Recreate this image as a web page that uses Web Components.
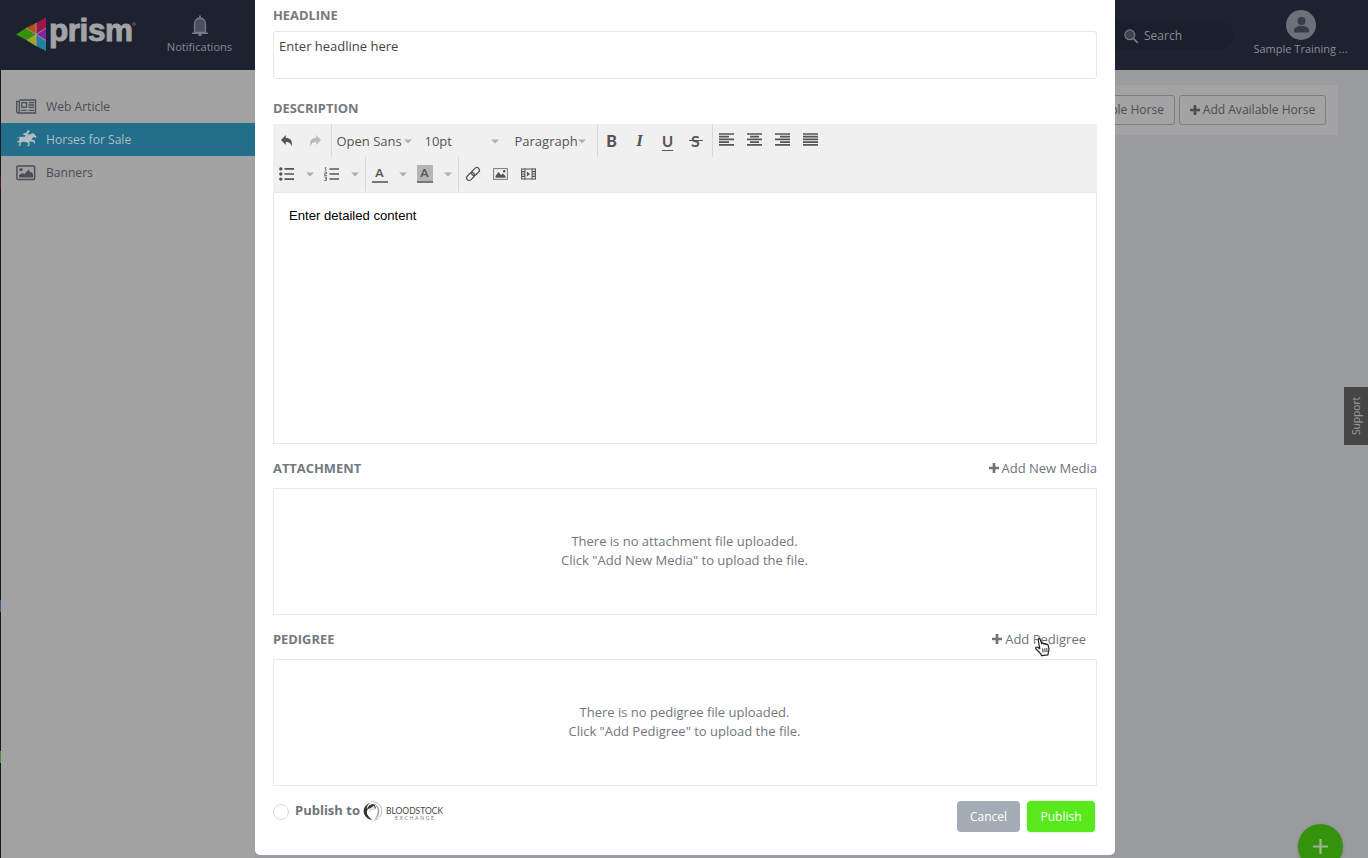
<!DOCTYPE html>
<html lang="en">
<head>
<meta charset="utf-8">
<title>Prism</title>
<style>
    html, body {
        margin: 0;
        height: 100%;
        overflow: hidden;
    }

    body {
        font: 13px/19px "Open Sans", sans-serif;
        color: #6b6f76;
        background: #9a9b9d;
    }
</style>
</head>
<body>
<prism-app></prism-app>

<script>
const ICONS = {
    bell: ['0 0 18 22', `<path d="M1 18.3h16" stroke="currentColor" stroke-width="1.4"/><path d="M3.500 17.500V9a5.500 6 0 0 1 11 0v8.500z" fill="#4b5060" stroke="currentColor" stroke-width="1.300"/><path d="M9 .4v2.400M7.500 20h3" stroke="currentColor" stroke-width="1.800"/>`],
    news: ['0 0 21 15', `<g fill="none" stroke="currentColor" stroke-width="1.300"><path d="M3.500 1h16v13H2.200C1 14 .7 13 .7 12V2.500h2.600V12c0 1-.4 1.800-1 2"/><rect x="5.800" y="3.700" width="4.700" height="4.600"/><path d="M12.500 3.700H18M12.500 6H18M12.500 8.300H18M5.200 11.300h5.500M12.500 11.300H18"/></g>`],
    horse: ['0 0 21 19', `<path fill="currentColor" d="M.5 9.500c.3-1.500 1.300-2.300 3-2.300 1.500-.4 3.200-.5 5-.2l1.300-1.700-2.600-.4.3-1.300 3.300-1.400c.2-.9.500-1.700 1.300-1.900.9-.2 1.600.4 1.500 1.200 0 .8-.5 1.200-1.200 1.200l-.9 1.200 1.900.6-.2.8-1.500.1.300.7 2.500-2.100 1.400-.4.3-.8.7.7 1.200.3 2.500 3-.6.9-1.400-.3-1.300-.3-1.700 2.500 2.500.7 1.200 1.500-.5 1.700-.9.200-.1-1.700-3.200-.6-1.700.4 1.200 1.900-1.500 2.500-1.600-.2.100-.7 1-.4.500-1.300-2.600-1.700-3.200-.1-1.700.7-.7 3.300-1.200.3-.8-.7.9-.8.200-2.500-1 .5-1.700-.4.3-.8 1.100-.1 1.300-1.700-.8-2.500-1.500.1-1 2.900z"/>`],
    banner: ['0 0 20 16', `<rect x=".9" y=".9" width="17.700" height="13.700" rx="1" fill="none" stroke="currentColor" stroke-width="1.500"/><circle cx="5" cy="4.600" r="1.700" fill="currentColor"/><path fill="currentColor" d="M3 12.500V10l3.500-2 2 1 4-4.500 2 3 1-.5 1.500 2.500v3z"/>`],
    search: ['0 0 15 15', `<circle cx="5.800" cy="5.800" r="4.900" fill="#3d4251" stroke="currentColor" stroke-width="1.200"/><path d="M9.300 9.300l4.500 4.500" stroke="currentColor" stroke-width="1.700"/>`],
    avatar: ['0 0 30 30', `<circle cx="15" cy="15" r="15" fill="#6c7078"/><circle cx="15.500" cy="11" r="4" fill="#363b4a"/><path d="M8 22.500v-2c0-3 3-4.500 7.500-4.500s7.500 1.500 7.500 4.500v2z" fill="#363b4a"/>`],
    plus: ['0 0 10 10', `<path d="M5 0v10M0 5h10" stroke="currentColor" stroke-width="2.700"/>`],
    thin: ['0 0 15 15', `<path d="M7.500 0v15M0 7.500h15" stroke="currentColor" stroke-width="2.200"/>`],
    caret: ['0 0 8 5', `<path fill="currentColor" d="M0 .5h8L4 4.500z"/>`],
    undo: ['0 0 12 12', `<path fill="currentColor" d="M4.800 0v2.800C9.500 3 11.800 6 10.600 11.500 10 8.500 8.500 7 4.800 7v3L0 5z"/>`],
    redo: ['0 0 12 12', `<path fill="currentColor" d="M7.200 0v2.800C2.500 3 .2 6 1.400 11.500 2 8.500 3.500 7 7.200 7v3L12 5z"/>`],
    left: ['0 0 15 13', `<path d="M0 1h15M0 3.700h10M0 6.400h15M0 9.100h10M0 11.800h15" stroke="currentColor" stroke-width="1.700"/>`],
    center: ['0 0 15 13', `<path d="M0 1h15M3 3.700h9M0 6.400h15M3 9.100h9M0 11.800h15" stroke="currentColor" stroke-width="1.700"/>`],
    right: ['0 0 15 13', `<path d="M0 1h15M5 3.700h10M0 6.400h15M5 9.100h10M0 11.800h15" stroke="currentColor" stroke-width="1.700"/>`],
    justify: ['0 0 15 13', `<path d="M0 1h15M0 3.700h15M0 6.400h15M0 9.100h15M0 11.800h15" stroke="currentColor" stroke-width="1.700"/>`],
    bullets: ['0 0 15 14', `<g fill="currentColor"><circle cx="1.800" cy="1.900" r="1.700"/><circle cx="1.800" cy="7" r="1.700"/><circle cx="1.800" cy="12.100" r="1.700"/></g><path d="M5.500 1.900H15M5.500 7H15M5.500 12.100H15" stroke="currentColor" stroke-width="1.700"/>`],
    numbers: ['0 0 15 14', `<path d="M5.500 2H15M5.500 7H15M5.500 12H15" stroke="currentColor" stroke-width="1.700"/><path d="M.8.900l1-.5v3.400M.4 5h2.100v1.700H.6v1.800h2.200M.4 10h2v1.700H1m1.400 0v1.800h-2" fill="none" stroke="currentColor" stroke-width=".8"/>`],
    link: ['0 0 14 14', `<g fill="none" stroke="currentColor" stroke-width="1.200" transform="rotate(-45 7 7)"><rect x="-1" y="4.400" width="9" height="5.200" rx="2.600"/><rect x="6" y="4.400" width="9" height="5.200" rx="2.600"/></g>`],
    image: ['0 0 15 12', `<rect x=".6" y=".6" width="13.800" height="10.800" fill="none" stroke="currentColor" stroke-width="1" opacity=".75"/><path fill="currentColor" d="M2.500 9.800V8L5.500 4l2.500 3 2-1.500L12.500 8v1.800z"/><circle cx="11.200" cy="3.300" r="1.200" fill="currentColor"/>`],
    media: ['0 0 15 12', `<path fill="currentColor" d="M5.800 3.500v5L9.200 6z"/><path d="M.5 1h14M.5 11h14" stroke="currentColor"/><path d="M.6.500v11M3.900.5v11M11.100.5v11M14.400.5v11" stroke="currentColor" stroke-width="1.100"/><path d="M1 3.600h3M1 6h3M1 8.400h3M11 3.600h3M11 6h3M11 8.400h3" stroke="currentColor" stroke-width="1.100"/>`],
    hand: ['0 0 15 18', `<path fill="#fff" stroke="#222" stroke-width="1.200" stroke-linejoin="round" d="M3.200 2C2.900.4 4.900.1 5.400 1.700l1.300 4.200c.3-1 1.900-1 2.200.2.500-.8 1.900-.6 2.100.5.700-.7 2-.3 2.200.8l.7 3.800c.2 1.500-.6 2.600-.7 4l-.2 1.700-6.500.8-.5-1.500C4.500 14.500 3 12.800 1 11c-1-1.200.3-2.400 1.600-1.700l2.200 1.400z"/><path d="M7.600 10.500l.5 4M9.700 10.300l.4 4M11.700 10l.4 4" stroke="#222" stroke-width=".9"/>`],
};

/**
 * inline svg icon
 * @property {ShadowRoot} root
 */
class UiIcon extends HTMLElement {
    connectedCallback() {
        const [box, shapes] = ICONS[this.getAttribute('name')];
        const [, , width, height] = box.split(' ');
        const root = this.attachShadow({ mode: 'open' });
        root.innerHTML = /*html*/ `
            <style>
                :host{
                    display: inline-block;
                    flex: none;
                    width: ${width}px;
                    height: ${height}px;
                }

                svg{
                    display: block;
                    overflow: visible;
                }
            </style>
            <svg width="100%" height="100%" viewBox="${box}">${shapes}</svg>
        `;
    }
}

/**
 * base class, renders the static template of the element
 */
class BaseElement extends HTMLElement {
    constructor() {
        super();
        this.root = this.attachShadow({ mode: 'open' });
    }

    connectedCallback() {
        this.root.innerHTML = this.render();
    }
}

class PrismHeader extends BaseElement {
    render() {
        return /*html*/ `
            <style>
                :host{
                    display: flex;
                    box-sizing: border-box;
                    height: 70px;
                    background: #1e2130;
                    color: #8b8d93;
                    font-size: 11px;
                    line-height: 16px;
                }

                .logo{
                    margin-left: 16px;
                    width: 124px;
                }

                .bell{
                    display: flex;
                    flex-direction: column;
                    align-items: center;
                    width: 119px;
                    padding-top: 15px;
                    color: #777a83;
                }

                .bell span{
                    margin-top: 2px;
                    color: #858891;
                    font-size: 11.1px;
                }

                .search{
                    display: flex;
                    align-items: center;
                    gap: 5px;
                    box-sizing: border-box;
                    width: 133px;
                    height: 30px;
                    margin: 20px 0 0 auto;
                    padding: 1px 0 0 24px;
                    border-radius: 15px;
                    background: #1a1f2c;
                    font-size: 12px;
                }

                .search ui-icon{
                    margin-top: 2px;
                    color: #777a80;
                }

                .user{
                    display: flex;
                    flex-direction: column;
                    align-items: center;
                    width: 135px;
                    padding-top: 10px;
                }

                .user span{
                    margin-top: 1px;
                }
            </style>
            <svg class="logo" height="70" viewBox="0 0 124 70">
                <path fill="#35920c" d="M0 34.500l10-6.500 10 6.500-9 6z"/>
                <path fill="#ad5316" d="M10 28l10-5v11.500z"/>
                <path fill="#9a1748" d="M20 23l10-5.500V28l-10 6.500z"/>
                <path fill="#84249a" d="M20 34.500l10-6.500v12.500z"/>
                <path fill="#a5a51b" d="M11 40.500l9-6V46z"/>
                <path fill="#25809e" d="M20 34.500l10 6V51l-10-5z"/>
                <path d="M10 28l20 12.500M11 40.500L30 28M20 23v23" stroke="#b3a4ac" stroke-width=".8"/>
                <text x="33" y="41" textLength="84" font-family="Liberation Sans, sans-serif" font-size="31.500" font-weight="700" fill="#a3a3a5" stroke="#a3a3a5" stroke-width="1">prism</text>
                <circle cx="118" cy="24" r="1.300" fill="none" stroke="#777a80" stroke-width=".7"/>
            </svg>
            <div class="bell"><ui-icon name="bell"></ui-icon><span>Notifications</span></div>
            <div class="search"><ui-icon name="search"></ui-icon><span>Search</span></div>
            <div class="user"><ui-icon name="avatar"></ui-icon><span>Sample Training ...</span></div>
        `;
    }
}

class NavItem extends BaseElement {
    render() {
        return /*html*/ `
            <style>
                :host{
                    display: flex;
                    align-items: center;
                    height: 33px;
                    padding-left: 15px;
                    font-size: 12.1px;
                    color: #4b4e57;
                }

                :host([active]){
                    background: #216f8b;
                    color: #b3bcc0;
                }

                .icon{
                    display: flex;
                    width: 30px;
                }
            </style>
            <span class="icon"><ui-icon name="${this.getAttribute('icon')}"></ui-icon></span>
            <slot></slot>
        `;
    }
}

class SideNav extends BaseElement {
    render() {
        return /*html*/ `
            <style>
                :host{
                    display: block;
                    box-sizing: border-box;
                    width: 255px;
                    padding-top: 20px;
                    background: #a2a2a2;
                    border-left: 1px solid;
                    border-image: linear-gradient(#1b1822 0 107px, #461a27 107px 120px, #1b1822 120px 530px, #3b5a8c 530px 542px, #1b1822 542px 680px, #4c8a38 680px 692px, #1b1822 692px) 1;
                }
            </style>
            <nav-item icon="news">Web Article</nav-item>
            <nav-item icon="horse" active>Horses for Sale</nav-item>
            <nav-item icon="banner">Banners</nav-item>
        `;
    }
}

class FormSection extends BaseElement {
    render() {
        return /*html*/ `
            <style>
                :host{
                    display: block;
                }

                header{
                    display: flex;
                    align-items: center;
                    justify-content: space-between;
                    box-sizing: border-box;
                    height: var(--head, 44px);
                    padding-top: var(--head-top, 4px);
                    padding-right: var(--head-right, 0px);
                }

                h3{
                    margin: 0;
                    font-size: 12.9px;
                    font-weight: 700;
                    line-height: 17px;
                    color: #757980;
                }
            </style>
            <header><h3>${this.getAttribute('label')}</h3><slot name="action"></slot></header>
            <slot></slot>
        `;
    }
}

class AddLink extends BaseElement {
    render() {
        return /*html*/ `
            <style>
                :host{
                    display: flex;
                    align-items: center;
                    gap: 3px;
                    color: #6f737a;
                }
            </style>
            <ui-icon name="plus"></ui-icon><slot></slot>
        `;
    }
}

class EmptyBox extends BaseElement {
    render() {
        return /*html*/ `
            <style>
                :host{
                    display: flex;
                    align-items: center;
                    justify-content: center;
                    box-sizing: border-box;
                    height: 127px;
                    padding: 0 1px 2px 0;
                    border: 1px solid #e9eaeb;
                    text-align: center;
                    color: #72767c;
                }
            </style>
            <div><slot></slot></div>
        `;
    }
}

class TextEditor extends BaseElement {
    render() {
        return /*html*/ `
            <style>
                :host{
                    display: flex;
                    flex-direction: column;
                    height: 320px;
                    color: #555;
                }

                .toolbar{
                    background: #f0f0f0;
                    height: 68px;
                }

                .row{
                    display: flex;
                    height: 34px;
                }

                .row:first-child{
                    height: 33px;
                }

                .group{
                    display: flex;
                    align-items: center;
                    box-sizing: border-box;
                    border-right: 1px solid #d9d9d9;
                }

                .group:last-child{
                    border: 0;
                }

                .group > span{
                    display: flex;
                    align-items: center;
                    justify-content: center;
                    width: 27px;
                    padding-right: 1px;
                }

                .group > .drop{
                    width: 17px;
                    padding: 0;
                }

                .drop ui-icon, .select ui-icon{
                    width: 8px;
                    height: 5px;
                    color: #b0b0b0;
                }

                .group > .select{
                    box-sizing: border-box;
                    justify-content: space-between;
                    padding: 2px 12px 0 4.5px;
                    width: 88px;
                    white-space: nowrap;
                }

                .format{
                    font: 900 16px/18px Lato, sans-serif;
                }

                .underline{
                    font-weight: 700;
                    font-size: 15px;
                    text-decoration: underline;
                    text-underline-offset: 3px;
                }

                .strike{
                    font-weight: 700;
                    background: linear-gradient(currentColor, currentColor) center / 14px 1px no-repeat;
                }

                .aligns ui-icon{
                    margin-top: -2px;
                }

                .letter{
                    box-sizing: border-box;
                    width: 16px;
                    height: 18px;
                    border-bottom: 2px solid #777;
                    text-align: center;
                    font: 700 12px/16px Lato, sans-serif;
                }

                .fill{
                    background: #b5b5b5;
                }

                .content{
                    flex: 1;
                    border: 1px solid #e7e7e7;
                    padding: 13px 15px;
                    font: 13.1px/20px "Liberation Sans", Arial, sans-serif;
                    color: #000;
                }
            </style>
            <div class="toolbar">
                <div class="row">
                    <div class="group" style="width: 59px">
                        <span><ui-icon name="undo"></ui-icon></span>
                        <span style="color: #bbb"><ui-icon name="redo"></ui-icon></span>
                    </div>
                    <div class="group" style="width: 266px">
                        <span class="select" style="padding-right: 8px">Open Sans<ui-icon name="caret"></ui-icon></span>
                        <span class="select" style="width: 90px; padding-right: 11px">10pt<ui-icon name="caret"></ui-icon></span>
                        <span class="select" style="width: 87px; padding-right: 11px">Paragraph<ui-icon name="caret"></ui-icon></span>
                    </div>
                    <div class="group" style="width: 115px">
                        <span class="format">B</span>
                        <span class="format" style="font: italic 700 17px/18px 'Liberation Serif', serif">I</span>
                        <span class="format underline">U</span>
                        <span class="format strike">S</span>
                    </div>
                    <div class="group aligns">
                        <span><ui-icon name="left"></ui-icon></span>
                        <span><ui-icon name="center"></ui-icon></span>
                        <span><ui-icon name="right"></ui-icon></span>
                        <span><ui-icon name="justify"></ui-icon></span>
                    </div>
                </div>
                <div class="row">
                    <div class="group" style="width: 93px">
                        <span><ui-icon name="bullets"></ui-icon></span>
                        <span class="drop"><ui-icon name="caret"></ui-icon></span>
                        <span><ui-icon name="numbers"></ui-icon></span>
                        <span class="drop"><ui-icon name="caret"></ui-icon></span>
                    </div>
                    <div class="group" style="width: 93px">
                        <span><b class="letter">A</b></span>
                        <span class="drop"><ui-icon name="caret"></ui-icon></span>
                        <span><b class="letter fill">A</b></span>
                        <span class="drop"><ui-icon name="caret"></ui-icon></span>
                    </div>
                    <div class="group">
                        <span><ui-icon name="link"></ui-icon></span>
                        <span><ui-icon name="image"></ui-icon></span>
                        <span><ui-icon name="media"></ui-icon></span>
                    </div>
                </div>
            </div>
            <div class="content">Enter detailed content</div>
        `;
    }
}

class ModalFooter extends BaseElement {
    render() {
        return /*html*/ `
            <style>
                :host{
                    display: flex;
                    align-items: flex-start;
                    padding-top: 15px;
                }

                .radio{
                    box-sizing: border-box;
                    width: 16px;
                    height: 16px;
                    margin-top: 3px;
                    border: 1px solid #d8d9dc;
                    border-radius: 50%;
                }

                b{
                    margin-left: 6px;
                    color: #6f747b;
                }

                .brand{
                    margin-left: 3px;
                    overflow: visible;
                }

                button{
                    height: 31px;
                    border: 0;
                    border-radius: 4px;
                    padding: 0;
                    font: 500 12px/31px "Open Sans", sans-serif;
                    color: #fff;
                }

                .cancel{
                    width: 63px;
                    margin-left: auto;
                    background: #a4acb5;
                }

                .publish{
                    width: 68px;
                    margin: 0 2px 0 7px;
                    background: #58e81b;
                    box-shadow: 0 0 3px #c9e6bd;
                }
            </style>
            <span class="radio"></span>
            <b>Publish to</b>
            <svg class="brand" width="86" height="24" viewBox="0 0 86 24">
                <path d="M8 .8a9.300 9.300 0 1 1 3 18.500" fill="none" stroke="#aaa" stroke-width=".8"/>
                <path d="M8 1.500C-1 4-2 15 7 18.500l2.500.5C4 15 2.500 11 5 8l3.500-1 3 1.200L13 7 11.500 3.500 9.500 3C7 3.500 4.500 5.500 4 8.500 3.500 5 5 3 8 1.500z" fill="#333"/>
                <path d="M5.500 8.500L11 4.500l1.500 4-4 .5-2 3z" fill="#ddd"/>
                <path d="M11 3c5 2 6 8 1.500 15M13.500 5c3 3 3 7 .5 11" fill="none" stroke="#888" stroke-width=".8"/>
                <text x="23" y="13" textLength="57" lengthAdjust="spacingAndGlyphs" font-family="Lato, sans-serif" font-size="9.500" fill="#444">BLOODSTOCK</text>
                <text x="32" y="18.600" textLength="39" font-family="Lato, sans-serif" font-size="5" fill="#777">EXCHANGE</text>
            </svg>
            <button class="cancel">Cancel</button>
            <button class="publish">Publish</button>
        `;
    }
}

class ArticleModal extends BaseElement {
    render() {
        return /*html*/ `
            <style>
                :host{
                    display: block;
                    box-sizing: border-box;
                    width: 860px;
                    height: 855px;
                    padding: 0 18px;
                    background: #fff;
                    border-radius: 0 0 5px 5px;
                }

                .headline{
                    box-sizing: border-box;
                    height: 48px;
                    border: 1px solid #e6e7ec;
                    border-radius: 3px;
                    padding: 5px;
                    color: #444;
                }

                .cursor{
                    position: absolute;
                    left: 780px;
                    top: 638px;
                }
            </style>
            <form-section label="HEADLINE" style="--head: 31px; --head-top: 0px">
                <div class="headline">Enter headline here</div>
            </form-section>
            <form-section label="DESCRIPTION" style="--head: 45px; --head-top: 14px">
                <text-editor></text-editor>
            </form-section>
            <form-section label="ATTACHMENT">
                <add-link slot="action">Add New Media</add-link>
                <empty-box>There is no attachment file uploaded.<br>Click "Add New Media" to upload the file.</empty-box>
            </form-section>
            <form-section label="PEDIGREE" style="--head-right: 11px">
                <add-link slot="action">Add Pedigree</add-link>
                <empty-box>There is no pedigree file uploaded.<br>Click "Add Pedigree" to upload the file.</empty-box>
            </form-section>
            <modal-footer></modal-footer>
            <ui-icon class="cursor" name="hand"></ui-icon>
        `;
    }
}

class PrismApp extends BaseElement {
    render() {
        return /*html*/ `
            <style>
                :host{
                    display: flex;
                    flex-direction: column;
                    position: relative;
                    height: 858px;
                    overflow: hidden;
                }

                .body{
                    display: flex;
                    flex: 1;
                }

                main{
                    flex: 1;
                    padding: 15px 30px 0 0;
                }

                .actions{
                    display: flex;
                    align-items: center;
                    justify-content: flex-end;
                    gap: 4px;
                    height: 50px;
                    padding-right: 12px;
                    background: #a3a3a3;
                }

                .action{
                    display: flex;
                    align-items: center;
                    justify-content: center;
                    gap: 3px;
                    box-sizing: border-box;
                    width: 147px;
                    height: 30px;
                    padding-bottom: 1px;
                    border: 1px solid #7c7d80;
                    border-radius: 3px;
                    font-size: 12.05px;
                    color: #4b4e57;
                }

                .backdrop{
                    position: absolute;
                    left: 255px;
                    top: 0;
                }

                .support{
                    position: absolute;
                    right: 0;
                    top: 387px;
                    width: 24px;
                    height: 58px;
                    background: #454545;
                    color: #a0a0a0;
                    font-size: 10.2px;
                    line-height: 25px;
                    text-align: center;
                    writing-mode: vertical-rl;
                    transform: rotate(180deg);
                }

                .fab{
                    position: absolute;
                    left: 1298px;
                    top: 824px;
                    display: flex;
                    align-items: center;
                    justify-content: center;
                    width: 45px;
                    height: 45px;
                    border-radius: 50%;
                    background: #35920c;
                    color: #a0b299;
                    box-shadow: 0 1px 3px #777;
                }
            </style>
            <prism-header></prism-header>
            <div class="body">
                <side-nav></side-nav>
                <main>
                    <div class="actions">
                        <span class="action" style="justify-content: flex-end; padding-right: 10px">ble Horse</span>
                        <span class="action"><ui-icon name="plus"></ui-icon>Add Available Horse</span>
                    </div>
                </main>
            </div>
            <article-modal class="backdrop"></article-modal>
            <div class="support">Support</div>
            <div class="fab"><ui-icon name="thin"></ui-icon></div>
        `;
    }
}

customElements.define('ui-icon', UiIcon);
customElements.define('prism-header', PrismHeader);
customElements.define('nav-item', NavItem);
customElements.define('side-nav', SideNav);
customElements.define('form-section', FormSection);
customElements.define('add-link', AddLink);
customElements.define('empty-box', EmptyBox);
customElements.define('text-editor', TextEditor);
customElements.define('modal-footer', ModalFooter);
customElements.define('article-modal', ArticleModal);
customElements.define('prism-app', PrismApp);
</script>
</body>
</html>
